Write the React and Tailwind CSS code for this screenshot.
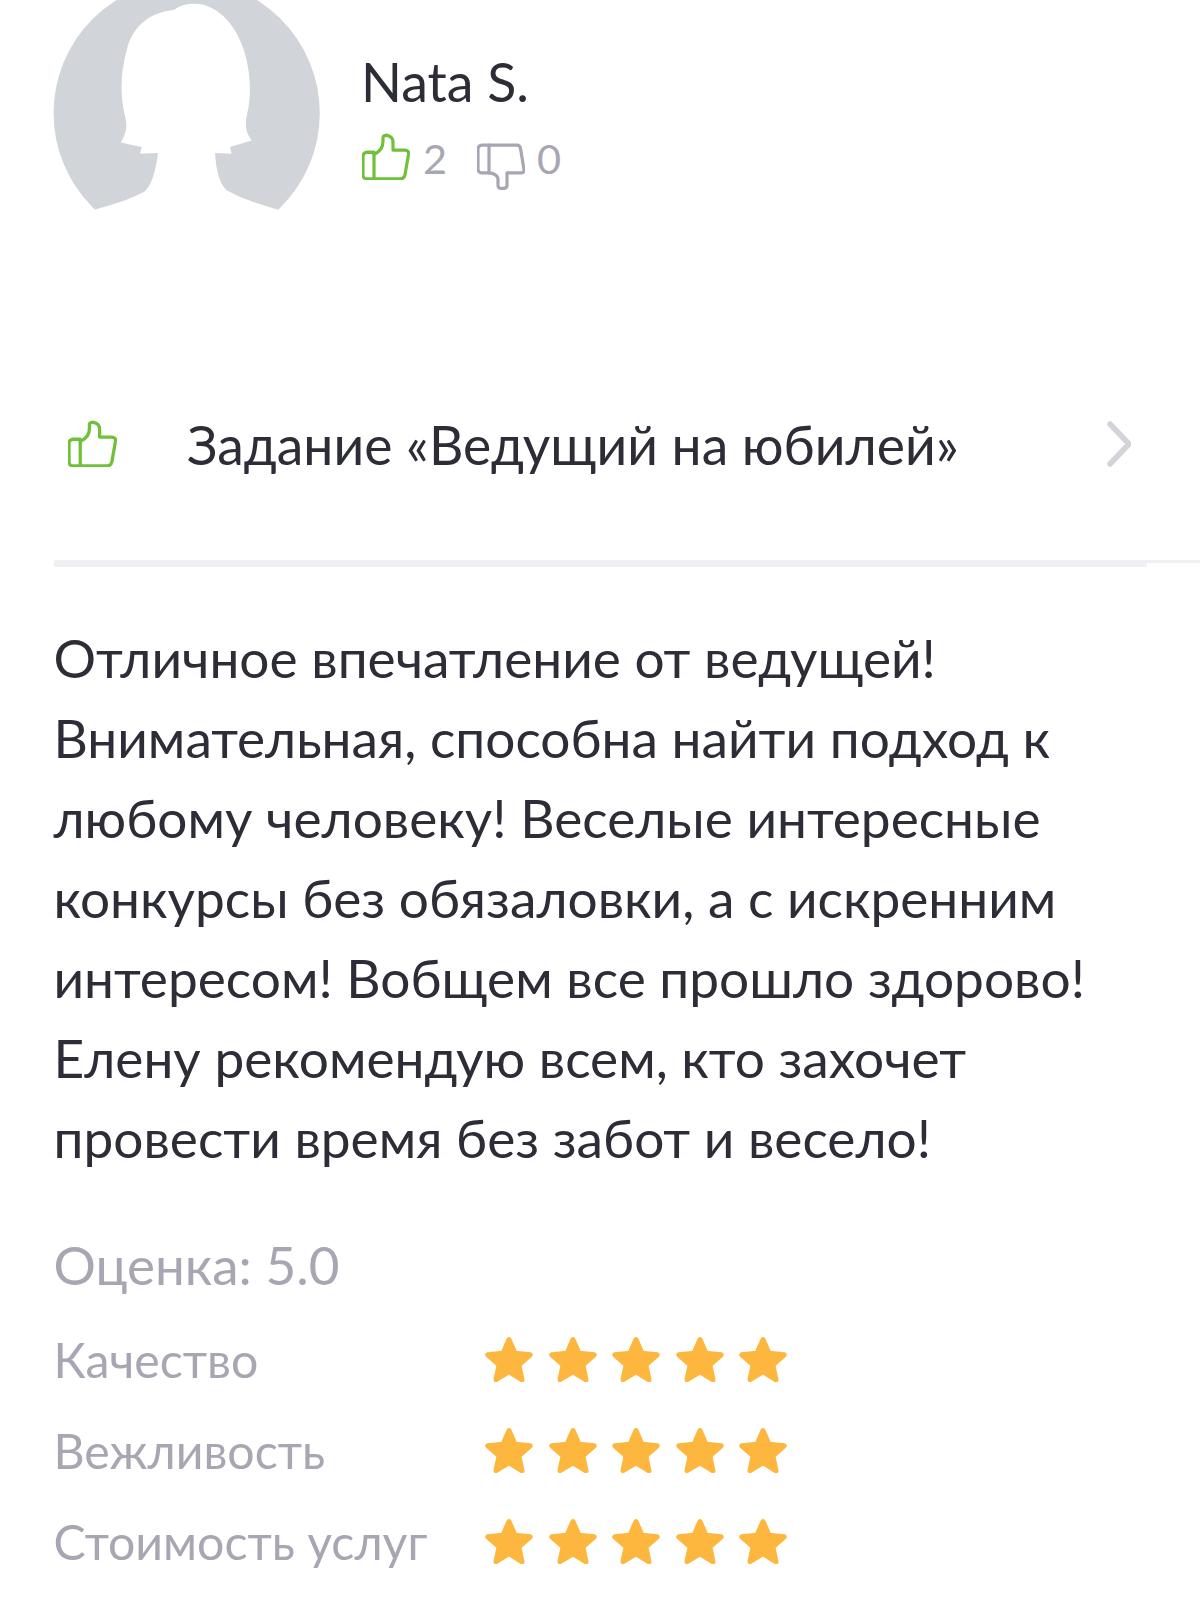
import { useId } from 'react';

const ThumbUp = ({ className }) => (
    <svg viewBox="0 0 48 44" preserveAspectRatio="none" fill="none" stroke="currentColor" strokeWidth="3.200" strokeLinejoin="round" strokeLinecap="round" className={className}>
        <path d="M12 18H5c-2.400 0-4 1.600-4 4v17c0 2.400 1.600 4 4 4h7z" />
        <path d="M12 20c5-2 9-6 9-12V4c0-3 10-3 10 5v7h12c2.600 0 4 1.600 3.500 4l-3.500 19c-.5 2.600-2 4-5 4H12" />
    </svg>
);

const ThumbDown = ({ className }) => (
    <svg viewBox="0 0 48 44" preserveAspectRatio="none" fill="none" stroke="currentColor" strokeWidth="3.200" strokeLinejoin="round" strokeLinecap="round" className={className}>
        <path d="M12 2H5C2.600 2 1 3.600 1 6v18c0 2.400 1.600 4 4 4h7z" />
        <path d="M12 2h28c2 0 3 1 3.500 3L47 25c.4 2-1 3-3 3H30v12c0 3-9 4-9 0v-6c0-3-4-6-9-6" />
    </svg>
);

const Star = () => (
    <svg viewBox="0 0 48 46" className="w-12 h-[46px] text-[#fdb63e]" fill="currentColor" stroke="currentColor" strokeWidth="5" strokeLinejoin="round">
        <path d="M24 3.500l6 13.700 15.200 1.600-11.300 10.200 3.100 14.800L24 35.800l-13 7.800 3.100-14.800L2.800 18.800 18 17.200z" />
    </svg>
);

const Avatar = () => {
    const clip = useId();
    return (
        <svg viewBox="0 0 960 640" className="w-[320px] h-[213px] shrink-0">
            <defs>
                <clipPath id={clip}>
                    <path d="M0 0H960V640H0z" />
                </clipPath>
            </defs>
            <g clipPath={`url(#${clip})`}>
                <circle cx="470" cy="340" r="400" fill="#d1d5d9" />
                <path
                    fill="#fff"
                    d="M435 28C455 12 490 8 520 14C580 30 625 90 645 160C662 220 665 290 652 340C645 370 645 395 665 422L600 442L605 462L555 460C558 500 565 550 590 572C640 600 700 618 760 634L760 660H180L180 634C240 618 300 600 345 575C370 550 378 500 384 460L330 462L335 442L272 428C290 400 292 375 285 350C272 300 268 230 290 150C305 90 345 40 430 30z"
                />
            </g>
        </svg>
    );
};

const ratings = ['Качество', 'Вежливость', 'Стоимость услуг'];

const App = () => {
    return (
        <div className="w-[1200px] h-[1620px] bg-white overflow-hidden font-['Lato','Noto_Sans',sans-serif] text-[#2d2d38]">
            {/* Profile */}
            <div className="flex pl-[30px]">
                <Avatar />
                <div className="pl-[10px] pt-[48px]">
                    <div className="pl-[2px] -ml-[1px] text-[53.7px] leading-[66px]">Nata S.</div>
                    <div className="flex items-center h-[50px] mt-[19px] pl-[2px] text-[41.5px] leading-[50px] text-[#a8a6b3]">
                        <ThumbUp className="w-12 h-[47px] -mt-[3px] text-[#70c13a]" />
                        <span className="ml-[13px]">2</span>
                        <ThumbDown className="w-12 h-[47px] ml-[30px] mt-[17px]" />
                        <span className="ml-[12px]">0</span>
                    </div>
                </div>
            </div>

            {/* Task link */}
            <div className="flex items-center mt-[201px] pl-[68px] pr-[69px] h-[60px]">
                <ThumbUp className="w-[49px] h-[47px] -mt-[2px] text-[#70c13a]" />
                <div className="ml-[70px] flex-1 text-[53.4px] leading-[60px]">Задание «Ведущий на юбилей»</div>
                <svg viewBox="0 0 24 46" className="w-6 h-[46px] text-[#d3d3da]" fill="none" stroke="currentColor" strokeWidth="5.500" strokeLinecap="round" strokeLinejoin="round">
                    <path d="M3 3l19 20L3 43" />
                </svg>
            </div>
            <div className="mt-[86px] flex items-start">
                <div className="ml-[54px] w-[1093px] h-[7px] bg-[#f0f0f4]" />
                <div className="flex-1 h-[3px] bg-[#f0f0f4]" />
            </div>

            {/* Review */}
            <p className="ml-[53.5px] mr-[20px] mt-[50px] text-[53.2px] leading-[80px]">
                Отличное впечатление от ведущей!<br />
                Внимательная, способна найти подход к<br />
                любому человеку! Веселые интересные<br />
                конкурсы без обязаловки, а с искренним<br />
                интересом! Вобщем все прошло здорово!<br />
                Елену рекомендую всем, кто захочет<br />
                провести время без забот и весело!
            </p>

            {/* Rating */}
            <div className="ml-[53.5px] mr-[54px] mt-[48px] text-[#a8a6b3]">
                <div className="text-[53px] leading-[80px]">Оценка: 5.0</div>
                <div className="mt-[24px] flex flex-col gap-[31px]">
                    {ratings.map((label) => (
                        <div key={label} className="flex items-center h-[60px]">
                            <div className="w-[431.5px] -mt-[1px] text-[48.2px] leading-[60px]">{label}</div>
                            <div className="flex gap-[15.5px]">
                                <Star />
                                <Star />
                                <Star />
                                <Star />
                                <Star />
                            </div>
                        </div>
                    ))}
                </div>
            </div>
        </div>
    );
};

export default App;
